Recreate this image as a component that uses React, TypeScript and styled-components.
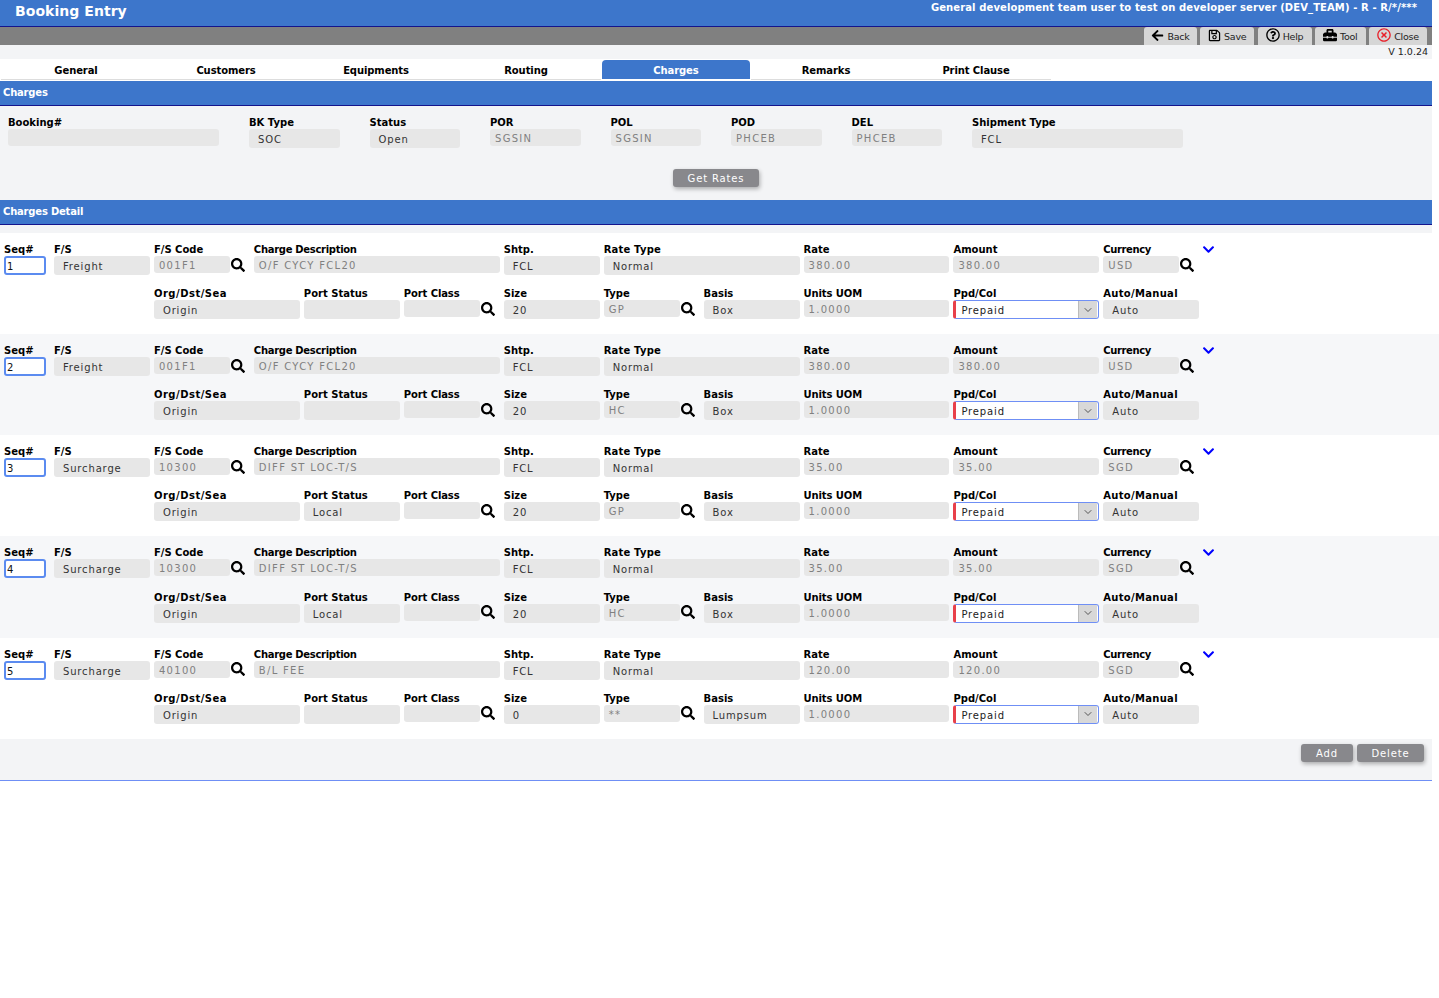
import React from "react";
import styled, { createGlobalStyle } from "styled-components";
import { FaArrowLeft, FaRegSave, FaRegQuestionCircle, FaToolbox, FaRegTimesCircle, FaSearch, FaChevronDown } from "react-icons/fa";
import { ChevronDown } from "lucide-react";

const Global = createGlobalStyle`
  html, body { margin: 0; padding: 0; background: #fff; }
  body { font-family: "DejaVu Sans", Verdana, sans-serif; font-size: 10px; color: #000; }
`;
const Page = styled.div`width: 1439px; min-height: 998px; background: #fff;`;
const Narrow = styled.div`width: 1432px;`;
const TitleBar = styled.header`
  height: 26px; background: #3d76cb; border-bottom: 1px solid #14148c; display: flex; justify-content: space-between; color: #fff; font-weight: bold;
`;
const Title = styled.h1`margin: 2px 0 0 15px; font-size: 14px; line-height: 18px; font-weight: bold; letter-spacing: 0.05px;`;
const UserInfo = styled.div`margin: 1px 15px 0 0; font-size: 10px; line-height: 13px; letter-spacing: 0.11px;`;
const Toolbar = styled.div`height: 18px; background: #808080; display: flex; justify-content: flex-end; gap: 3.25px; padding-right: 5px;`;
const ToolButton = styled.div<{ $w: number }>`
  width: ${p => p.$w}px; background: #d6d6d6; border-radius: 3px 3px 0 0; display: flex; align-items: center; justify-content: center; gap: 3px;
  font-size: 9.5px; color: #222; letter-spacing: -0.25px; padding-top: 1px; box-sizing: border-box;
  svg { flex: none; margin-top: -3px; }
`;
const VersionRow = styled.div`height: 14px; background: #f3f4f6; text-align: right; padding-right: 4px; font-size: 9.5px; line-height: 13px; color: #222;`;
const Tabs = styled.nav`height: 22px; background: #fff; display: flex; padding-left: 1px; box-sizing: border-box;`;
const Tab = styled.div<{ $active?: boolean }>`
  width: 150px; height: 21px; box-sizing: border-box; text-align: center; font-weight: bold; font-size: 10px; letter-spacing: -0.1px; line-height: 23px; border-bottom: 1px solid #ddd;
  background: #fff; color: #000; flex: none; position: relative;
  ${p => p.$active && `
    color: #fff; z-index: 1; border-bottom-color: #fff;
    &::before { content: ""; position: absolute; left: 1px; right: 1px; top: 1px; bottom: 0; background: #3d76cb; border-radius: 4px 4px 0 0; z-index: -1; }
  `}
`;
const SectionBar = styled.div`
  height: 24px; background: #3d76cb; border-bottom: 1px solid #14148c; color: #fff; font-weight: bold; font-size: 10px; letter-spacing: -0.2px; line-height: 23px; padding-left: 3px;
`;
const HeaderForm = styled.div`height: 94px; background: #f3f4f6; padding: 11px 0 0 8px; box-sizing: border-box;`;
const HeaderGrid = styled.div`display: grid; grid-template-columns: repeat(10, 90.5px); column-gap: 30px;`;
const Field = styled.div<{ $span: number; $start?: number }>`
  grid-column: ${p => (p.$start ? `${p.$start} / span ${p.$span}` : `span ${p.$span}`)}; min-width: 0;
`;
const Label = styled.div<{ $track?: number }>`
  font-weight: bold; font-size: 10px; line-height: 12px; height: 12px; white-space: nowrap; letter-spacing: ${p => p.$track ?? 0}px;
`;
const Value = styled.div<{ $dim?: boolean }>`
  height: ${p => (p.$dim ? 17 : 19)}px; background: #e7e7e7; border-radius: 3px; box-sizing: border-box; font-size: 10px; white-space: nowrap;
  letter-spacing: ${p => (p.$dim ? 1.3 : 0.85)}px;
  padding-left: ${p => (p.$dim ? 5 : 9)}px; line-height: ${p => (p.$dim ? 19 : 22)}px; color: ${p => (p.$dim ? "#808080" : "#333")};
`;
const Center = styled.div`display: flex; justify-content: center; margin-top: 21px; padding-right: 8px;`;
const GreyButton = styled.button<{ $w: number }>`
  width: ${p => p.$w}px; height: 18px; border: none; padding: 0; border-radius: 3px; background: #88888c; color: #fff; font: 10px "DejaVu Sans", sans-serif; letter-spacing: 0.85px;
  box-shadow: 1px 2px 4px rgba(0,0,0,.3);
`;
const Gap = styled.div`height: 8px; background: #f3f4f6; width: 1432px;`;
const Row = styled.section<{ $alt: boolean }>`
  height: 101.15px; box-sizing: border-box; background: ${p => (p.$alt ? "#f6f7f9" : "#fff")}; padding: 11px 0 0 4px;
`;
const RowGrid = styled.div`display: grid; grid-template-columns: repeat(25, 45.97px); column-gap: 4px; row-gap: 13.1px; grid-auto-rows: 31px; position: relative;`;
const SeqInput = styled.div`
  width: 42px; height: 19px; box-sizing: border-box; border: 2px solid #5b8bf0; border-radius: 3px; background: #fff; font-size: 10px; line-height: 18px; padding-left: 1px; color: #111;
`;
const Lookup = styled.div`display: flex; align-items: flex-start; gap: 1px; svg { flex: none; margin-top: 1.6px; }`;
const LookupValue = styled(Value)`width: 76px; flex: none;`;
const Chevron = styled.div`position: absolute; left: 1198px; top: -1px; color: #0000ff; line-height: 0;`;
const SelectBox = styled.div`
  height: 19px; box-sizing: border-box; border: 1px solid #6f8ff5; border-left: 3px solid #e8404a; border-radius: 3px; background: #fff; display: flex; justify-content: space-between;
  font-size: 10px; letter-spacing: 0.85px; color: #222; line-height: 20px; padding-left: 5px;
`;
const SelectArrow = styled.div`width: 18px; background: #d8d8d8; border-left: 1px solid #bbb; display: flex; align-items: center; justify-content: center; color: #555; margin-right: 1px;`;
const Footer = styled.div`
  height: 42.25px; box-sizing: border-box; background: #f3f4f6; border-bottom: 1px solid #6f8ff5; display: flex; justify-content: flex-end; gap: 4px; padding: 5.5px 8px 0 0;
`;

const rows = [
  { seq: "1", fs: "Freight", code: "001F1", desc: "O/F CYCY FCL20", port: "", size: "20", type: "GP", basis: "Box", rate: "380.00", cur: "USD" },
  { seq: "2", fs: "Freight", code: "001F1", desc: "O/F CYCY FCL20", port: "", size: "20", type: "HC", basis: "Box", rate: "380.00", cur: "USD" },
  { seq: "3", fs: "Surcharge", code: "10300", desc: "DIFF ST LOC-T/S", port: "Local", size: "20", type: "GP", basis: "Box", rate: "35.00", cur: "SGD" },
  { seq: "4", fs: "Surcharge", code: "10300", desc: "DIFF ST LOC-T/S", port: "Local", size: "20", type: "HC", basis: "Box", rate: "35.00", cur: "SGD" },
  { seq: "5", fs: "Surcharge", code: "40100", desc: "B/L FEE", port: "", size: "0", type: "**", basis: "Lumpsum", rate: "120.00", cur: "SGD" },
];
const tabs = ["General", "Customers", "Equipments", "Routing", "Charges", "Remarks", "Print Clause"];
const head: [string, string, number, boolean][] = [
  ["Booking#", "", 2, true], ["BK Type", "SOC", 1, false], ["Status", "Open", 1, false], ["POR", "SGSIN", 1, true],
  ["POL", "SGSIN", 1, true], ["POD", "PHCEB", 1, true], ["DEL", "PHCEB", 1, true], ["Shipment Type", "FCL", 2, false],
];
const Search = () => <FaSearch size={14} color="#000" />;

export default function App() {
  return (
    <Page>
      <Global />
      <Narrow>
        <TitleBar>
          <Title>Booking Entry</Title>
          <UserInfo>General development team user to test on developer server (DEV_TEAM) - R - R/*/***</UserInfo>
        </TitleBar>
        <Toolbar>
          <ToolButton $w={53}><FaArrowLeft size={13} color="#000" />Back</ToolButton>
          <ToolButton $w={54}><FaRegSave size={13} color="#000" />Save</ToolButton>
          <ToolButton $w={54}><FaRegQuestionCircle size={14} color="#000" />Help</ToolButton>
          <ToolButton $w={51}><FaToolbox size={14} color="#000" />Tool</ToolButton>
          <ToolButton $w={58}><FaRegTimesCircle size={14} color="#e8202a" />Close</ToolButton>
        </Toolbar>
        <VersionRow>V 1.0.24</VersionRow>
        <Tabs>{tabs.map(t => <Tab key={t} $active={t === "Charges"}>{t}</Tab>)}</Tabs>
        <SectionBar>Charges</SectionBar>
        <HeaderForm>
          <HeaderGrid>
            {head.map(([l, v, s, d]) => (
              <Field key={l} $span={s}><Label>{l}</Label><Value $dim={d}>{v}</Value></Field>
            ))}
          </HeaderGrid>
          <Center><GreyButton $w={86}>Get Rates</GreyButton></Center>
        </HeaderForm>
        <SectionBar>Charges Detail</SectionBar>
        <Gap />
      </Narrow>
      {rows.map((r, i) => (
        <Row key={r.seq} $alt={i % 2 === 1}>
          <RowGrid>
            <Field $span={1}><Label>Seq#</Label><SeqInput>{r.seq}</SeqInput></Field>
            <Field $span={2}><Label>F/S</Label><Value>{r.fs}</Value></Field>
            <Field $span={2}><Label>F/S Code</Label><Lookup><LookupValue $dim>{r.code}</LookupValue><Search /></Lookup></Field>
            <Field $span={5}><Label $track={-0.3}>Charge Description</Label><Value $dim>{r.desc}</Value></Field>
            <Field $span={2}><Label>Shtp.</Label><Value>FCL</Value></Field>
            <Field $span={4}><Label $track={0.2}>Rate Type</Label><Value>Normal</Value></Field>
            <Field $span={3}><Label>Rate</Label><Value $dim>{r.rate}</Value></Field>
            <Field $span={3}><Label>Amount</Label><Value $dim>{r.rate}</Value></Field>
            <Field $span={2}><Label $track={-0.4}>Currency</Label><Lookup><LookupValue $dim>{r.cur}</LookupValue><Search /></Lookup></Field>
            <Chevron><FaChevronDown size={13} /></Chevron>
            <Field $span={3} $start={4}><Label $track={0.5}>Org/Dst/Sea</Label><Value>Origin</Value></Field>
            <Field $span={2}><Label>Port Status</Label><Value>{r.port}</Value></Field>
            <Field $span={2}><Label $track={-0.1}>Port Class</Label><Lookup><LookupValue $dim /><Search /></Lookup></Field>
            <Field $span={2}><Label>Size</Label><Value>{r.size}</Value></Field>
            <Field $span={2}><Label>Type</Label><Lookup><LookupValue $dim>{r.type}</LookupValue><Search /></Lookup></Field>
            <Field $span={2}><Label>Basis</Label><Value>{r.basis}</Value></Field>
            <Field $span={3}><Label $track={-0.1}>Units UOM</Label><Value $dim>1.0000</Value></Field>
            <Field $span={3}><Label>Ppd/Col</Label><SelectBox>Prepaid<SelectArrow><ChevronDown size={12} /></SelectArrow></SelectBox></Field>
            <Field $span={2}><Label $track={0.3}>Auto/Manual</Label><Value>Auto</Value></Field>
          </RowGrid>
        </Row>
      ))}
      <Narrow>
        <Footer>
          <GreyButton $w={52}>Add</GreyButton>
          <GreyButton $w={67}>Delete</GreyButton>
        </Footer>
      </Narrow>
    </Page>
  );
}
